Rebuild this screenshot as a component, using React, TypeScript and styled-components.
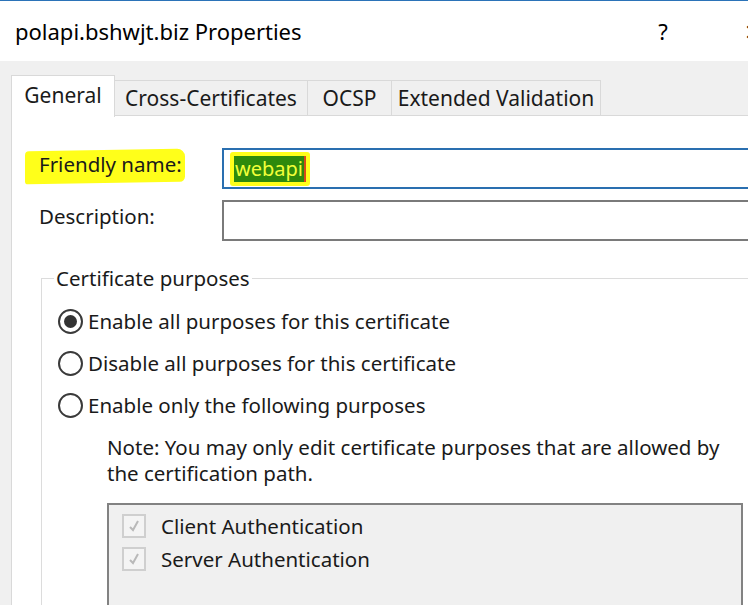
import React from "react";
import styled, { createGlobalStyle } from "styled-components";

const Global = createGlobalStyle`
  html, body { margin: 0; padding: 0; }
  body {
    width: 748px;
    height: 605px;
    overflow: hidden;
    background: #f0f0f0;
    font-family: "Noto Sans", "Open Sans", sans-serif;
    color: #1a1a1a;
  }
`;

const Window = styled.div`
  width: 820px;
  height: 605px;
  border-top: 1px solid #2b73b8;
  background: #f0f0f0;
  display: flex;
  flex-direction: column;
  box-sizing: border-box;
`;

const TitleBar = styled.div`
  height: 60px;
  flex: none;
  background: #ffffff;
  display: flex;
  align-items: center;
  padding-left: 15px;
  font-size: 22px;
  color: #000;
`;

const Title = styled.span`
  width: 618px;
  flex: none;
`;

const TitleButton = styled.span<{ $w: number }>`
  width: ${(p) => p.$w}px;
  flex: none;
  text-align: center;
  font-size: 22px;
  color: #000;
`;

const Body = styled.div`
  flex: 1;
  padding: 14px 0 0 11px;
  display: flex;
  flex-direction: column;
`;

const TabRow = styled.div`
  display: flex;
  align-items: flex-end;
  height: 41px;
  position: relative;
  z-index: 1;
  margin-bottom: -1px;
`;

const Tab = styled.div<{ $active?: boolean; $w: number }>`
  box-sizing: border-box;
  width: ${(p) => p.$w}px;
  height: ${(p) => (p.$active ? 42 : 36)}px;
  margin-bottom: ${(p) => (p.$active ? -1 : 0)}px;
  background: ${(p) => (p.$active ? "#ffffff" : "#f0f0f0")};
  border: 1px solid #d9d9d9;
  border-bottom: ${(p) => (p.$active ? "none" : "1px solid #d9d9d9")};
  border-left: ${(p) => (p.$active ? "1px solid #d9d9d9" : "none")};
  font-size: 21px;
  display: flex;
  align-items: ${(p) => (p.$active ? "flex-start" : "center")};
  padding-top: ${(p) => (p.$active ? 5 : 0)}px;
  justify-content: center;
  color: #1a1a1a;
  white-space: nowrap;
`;

const Panel = styled.div`
  flex: 1;
  background: #ffffff;
  border: 1px solid #d9d9d9;
  border-right: none;
  border-bottom: none;
  padding: 32px 0 0 27px;
  display: flex;
  flex-direction: column;
`;

const FieldRow = styled.div`
  display: grid;
  grid-template-columns: 183px 1fr;
  align-items: start;
  margin-bottom: 11px;
`;

const Label = styled.div`
  font-size: 20.5px;
  line-height: 28px;
  padding-top: 2px;
  position: relative;
  justify-self: start;
`;

const Marker = styled.span`
  position: absolute;
  left: -14px;
  right: -3px;
  top: 2px;
  bottom: -5px;
  background: #ffff1a;
  border-radius: 4px 8px 5px 3px;
  transform: skewY(-1deg);
  z-index: 0;
`;

const LabelText = styled.span`
  position: relative;
  z-index: 1;
`;

const Input = styled.div<{ $focused?: boolean }>`
  box-sizing: border-box;
  height: 41px;
  border: 2px solid ${(p) => (p.$focused ? "#2a6fb0" : "#7a7a7a")};
  border-right: none;
  background: #ffffff;
  display: flex;
  align-items: center;
  padding-left: 6px;
`;

const Highlight = styled.span`
  display: inline-flex;
  align-items: center;
  padding: 4px 4px;
  background: #ffff1a;
  border-radius: 3px;
`;

const Selection = styled.span`
  background: #2e8a0c;
  color: #f2ff3a;
  font-size: 20px;
  line-height: 26px;
  padding: 0 1px;
  border-right: 2px solid #d84a1a;
`;

const Group = styled.fieldset`
  margin: 15px 0 0 2px;
  padding: 11px 0 0 16px;
  border: 1px solid #dcdcdc;
  border-right: none;
  border-bottom: none;
  flex: 1;
  min-width: 0;
`;

const Legend = styled.legend`
  font-size: 20.5px;
  padding: 0 2px;
  margin-left: -4px;
  line-height: 22px;
`;

const RadioRow = styled.div`
  display: flex;
  align-items: center;
  height: 42px;
  font-size: 20.5px;
  gap: 5px;
`;

const RadioCircle = styled.span<{ $checked?: boolean }>`
  box-sizing: border-box;
  width: 25px;
  height: 25px;
  border-radius: 50%;
  border: 2px solid #3a3a3a;
  background: #fff;
  display: flex;
  align-items: center;
  justify-content: center;
  &::after {
    content: "";
    width: 13px;
    height: 13px;
    border-radius: 50%;
    background: ${(p) => (p.$checked ? "#333" : "transparent")};
  }
`;

const Indented = styled.div`
  padding-left: 49px;
  display: flex;
  flex-direction: column;
`;

const Note = styled.div`
  font-size: 20.5px;
  line-height: 26px;
  margin-top: 8px;
  width: 628px;
`;

const ListBox = styled.div`
  margin-top: 17px;
  width: 636px;
  height: 200px;
  box-sizing: border-box;
  border: 2px solid #828282;
  background: #f0f0f0;
  padding: 4px 0 0 13px;
  display: flex;
  flex-direction: column;
`;

const CheckRow = styled.div`
  display: flex;
  align-items: center;
  height: 33px;
  font-size: 20.5px;
  gap: 15px;
`;

const CheckBox = styled.span`
  box-sizing: border-box;
  width: 24px;
  height: 24px;
  border: 2px solid #cfcfcf;
  background: #f4f4f4;
  display: flex;
  align-items: center;
  justify-content: center;
`;

const Check = () => (
  <svg width="16" height="16" viewBox="0 0 16 16">
    <path d="M4 9 L7 12 L12 3" fill="none" stroke="#b9b9b9" strokeWidth="2" />
  </svg>
);

export default function App() {
  return (
    <>
      <Global />
      <Window>
        <TitleBar>
          <Title>polapi.bshwjt.biz Properties</Title>
          <TitleButton $w={60}>?</TitleButton>
          <TitleButton $w={120}>✕</TitleButton>
        </TitleBar>
        <Body>
          <TabRow>
            <Tab $active $w={104}>General</Tab>
            <Tab $w={193}>Cross-Certificates</Tab>
            <Tab $w={84}>OCSP</Tab>
            <Tab $w={209}>Extended Validation</Tab>
          </TabRow>
          <Panel>
            <FieldRow>
              <Label>
                <Marker />
                <LabelText>Friendly name:</LabelText>
              </Label>
              <Input $focused>
                <Highlight>
                  <Selection>webapi</Selection>
                </Highlight>
              </Input>
            </FieldRow>
            <FieldRow>
              <Label>Description:</Label>
              <Input />
            </FieldRow>
            <Group>
              <Legend>Certificate purposes</Legend>
              <RadioRow>
                <RadioCircle $checked />
                Enable all purposes for this certificate
              </RadioRow>
              <RadioRow>
                <RadioCircle />
                Disable all purposes for this certificate
              </RadioRow>
              <RadioRow>
                <RadioCircle />
                Enable only the following purposes
              </RadioRow>
              <Indented>
                <Note>
                  Note: You may only edit certificate purposes that are allowed by the certification path.
                </Note>
                <ListBox>
                  <CheckRow>
                    <CheckBox><Check /></CheckBox>
                    Client Authentication
                  </CheckRow>
                  <CheckRow>
                    <CheckBox><Check /></CheckBox>
                    Server Authentication
                  </CheckRow>
                </ListBox>
              </Indented>
            </Group>
          </Panel>
        </Body>
      </Window>
    </>
  );
}
